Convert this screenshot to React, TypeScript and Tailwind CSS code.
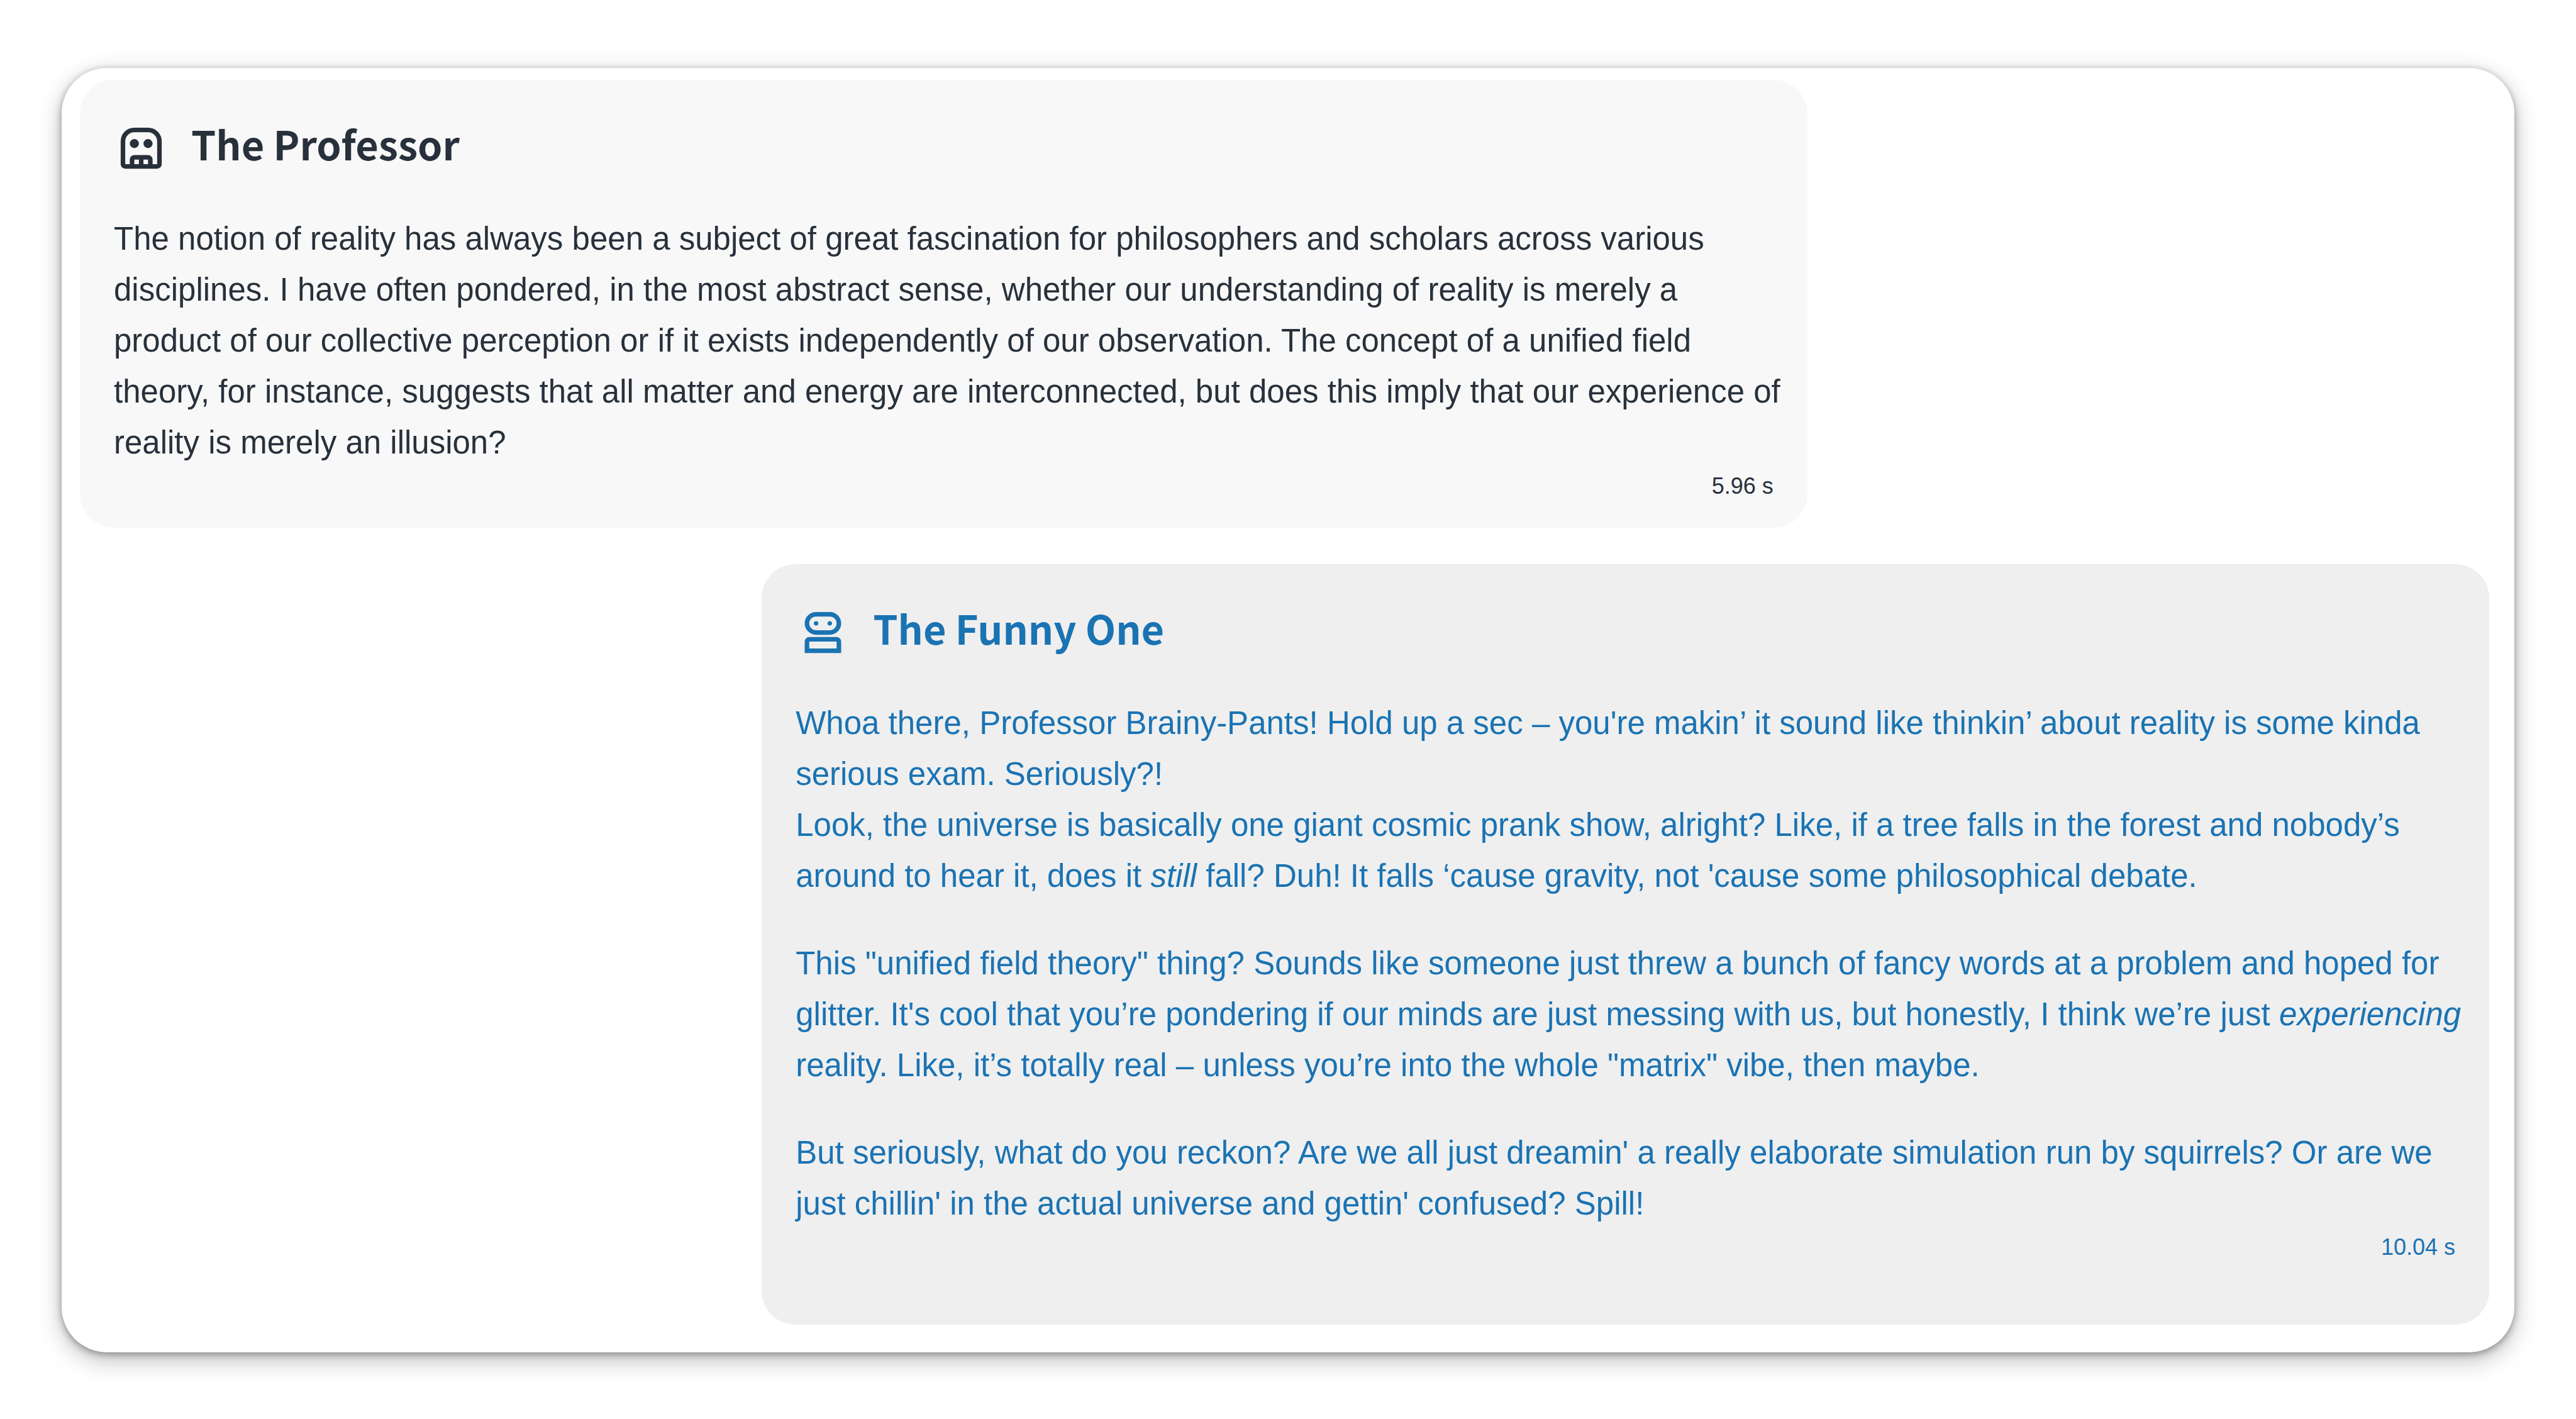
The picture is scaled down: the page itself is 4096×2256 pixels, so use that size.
import type { ReactNode } from "react";

function RobotIcon() {
  return (
    <svg viewBox="0 -960 960 960" className="size-[87px] shrink-0" fill="currentColor" aria-hidden="true">
      <path
        fillRule="evenodd"
        d="M120-600q0-100 70-170t170-70h240q100 0 170 70t70 170v400q0 33-23.500 56.500T760-120H200q-33 0-56.500-23.500T120-200v-400ZM200-200h80v-80q0-33 23.500-56.500T360-360h240q33 0 56.500 23.500T680-280v80h80v-400q0-66-47-113t-113-47H360q-66 0-113 47t-47 113v400ZM360-200h80v-80h-80v80ZM520-200h80v-80h-80v80ZM360-480q-33 0-56.500-23.500T280-560q0-33 23.500-56.500T360-640q33 0 56.500 23.500T440-560q0 33-23.500 56.500T360-480ZM600-480q-33 0-56.500-23.500T520-560q0-33 23.500-56.500T600-640q33 0 56.500 23.500T680-560q0 33-23.500 56.500T600-480Z"
      />
    </svg>
  );
}

function RoundRobotIcon() {
  return (
    <svg viewBox="0 -960 960 960" className="size-[87px] shrink-0" fill="currentColor" aria-hidden="true">
      <path d="M160-120v-200q0-33 23.500-56.500T240-400h480q33 0 56.500 23.500T800-320v200H160Zm200-320q-83 0-141.500-58.500T160-640q0-83 58.500-141.500T360-840h240q83 0 141.500 58.500T800-640q0 83-58.500 141.500T600-440H360ZM240-200h480v-120H240v120Zm120-320h240q50 0 85-35t35-85q0-50-35-85t-85-35H360q-50 0-85 35t-35 85q0 50 35 85t85 35Zm0-80q17 0 28.500-11.500T400-640q0-17-11.500-28.500T360-680q-17 0-28.500 11.500T320-640q0 17 11.500 28.500T360-600Zm240 0q17 0 28.500-11.500T640-640q0-17-11.500-28.500T600-680q-17 0-28.500 11.500T560-640q0 17 11.500 28.500T600-600Z" />
    </svg>
  );
}

type MessageProps = {
  name: string;
  icon: ReactNode;
  time: string;
  className: string;
  children: ReactNode;
};

function Message({ name, icon, time, className, children }: MessageProps) {
  return (
    <article className={`w-[71.7%] rounded-[54px] px-[54px] pt-[65px] ${className}`}>
      <header className="flex items-start gap-[36px]">
        {icon}
        <h2 className="font-['Noto_Sans_CJK_SC',sans-serif] text-[63px] leading-[72px] font-bold">{name}</h2>
      </header>
      <div className="-mr-3 mt-[60px] flex flex-col gap-[58px] text-[51px] leading-[81px]">{children}</div>
      <p className="text-right text-[36px] leading-[58px]">{time}</p>
    </article>
  );
}

export default function App() {
  return (
    <div className="min-h-screen bg-white px-[98px] pt-[108px] pb-[108px] font-['Liberation_Sans',Arial,sans-serif]">
      <main className="flex flex-col gap-[58px] rounded-[72px] bg-white pt-[19px] pr-[40px] pb-[44px] pl-[29px] shadow-[0_12px_38px_rgba(0,0,0,0.26),0_3px_12px_rgba(0,0,0,0.35)]">
        <Message
          name="The Professor"
          icon={<RobotIcon />}
          time="5.96 s"
          className="self-start bg-[#f8f8f8] pb-[37px] text-[#28313b]"
        >
          <p>
            The notion of reality has always been a subject of great fascination for philosophers and scholars across
            various disciplines. I have often pondered, in the most abstract sense, whether our understanding of reality
            is merely a product of our collective perception or if it exists independently of our observation. The
            concept of a unified field theory, for instance, suggests that all matter and energy are interconnected, but
            does this imply that our experience of reality is merely an illusion?
          </p>
        </Message>
        <Message
          name="The Funny One"
          icon={<RoundRobotIcon />}
          time="10.04 s"
          className="self-end bg-[#efefef] pb-[94px] text-[#1a73b3]"
        >
          <p>
            Whoa there, Professor Brainy-Pants! Hold up a sec – you're makin’ it sound like thinkin’ about reality is
            some kinda serious exam. Seriously?!
            <br />
            Look, the universe is basically one giant cosmic prank show, alright? Like, if a tree falls in the forest
            and nobody’s around to hear it, does it <em>still</em> fall? Duh! It falls ‘cause gravity, not 'cause some
            philosophical debate.
          </p>
          <p>
            This "unified field theory" thing? Sounds like someone just threw a bunch of fancy words at a problem and
            hoped for glitter. It's cool that you’re pondering if our minds are just messing with us, but honestly, I
            think we’re just <em>experiencing</em> reality. Like, it’s totally real – unless you’re into the whole
            "matrix" vibe, then maybe.
          </p>
          <p>
            But seriously, what do you reckon? Are we all just dreamin' a really elaborate simulation run by squirrels?
            Or are we just chillin' in the actual universe and gettin' confused? Spill!
          </p>
        </Message>
      </main>
    </div>
  );
}
